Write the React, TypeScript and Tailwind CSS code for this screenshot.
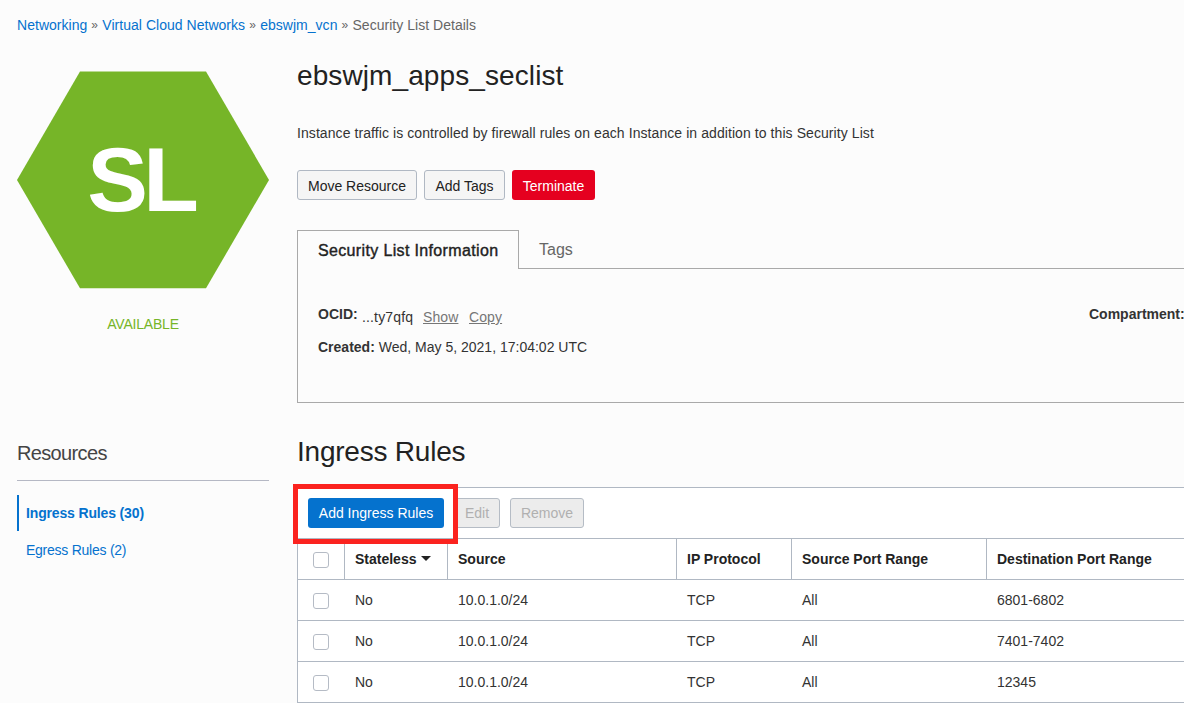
import React from 'react';

const rules = [
  { source: '10.0.1.0/24', protocol: 'TCP', sourcePorts: 'All', destPorts: '6801-6802' },
  { source: '10.0.1.0/24', protocol: 'TCP', sourcePorts: 'All', destPorts: '7401-7402' },
  { source: '10.0.1.0/24', protocol: 'TCP', sourcePorts: 'All', destPorts: '12345' },
];

function Checkbox() {
  return (
    <span
      role="checkbox"
      aria-checked="false"
      className="mt-px ml-[15px] block size-4 rounded-[3px] border border-[#b5bbc5] bg-white"
    />
  );
}

function Breadcrumb() {
  return (
    <nav className="flex h-[18px] items-center gap-1 whitespace-pre text-[14px] leading-[18px] tracking-[0.03px] text-[#666]">
      <a className="text-[#0572ce]">Networking</a>
      <span className="w-[7px] text-[12px]">»</span>
      <a className="text-[#0572ce]">Virtual Cloud Networks</a>
      <span className="w-[7px] text-[12px]">»</span>
      <a className="text-[#0572ce]">ebswjm_vcn</a>
      <span className="w-[7px] text-[12px]">»</span>
      <span>Security List Details</span>
    </nav>
  );
}

function Sidebar() {
  return (
    <aside className="w-[252px] shrink-0">
      <svg className="mt-[37px] block h-[218px] w-[252px]" viewBox="0 0 252 218">
        <polygon points="63,0.5 189,0.5 252,109 189,217.3 63,217.3 0,109" fill="#76b528" />
        <text
          x="126"
          y="140"
          textAnchor="middle"
          textLength="111.5"
          fill="#fff"
          className="font-['Liberation_Sans',sans-serif] text-[91px] font-bold"
        >
          SL
        </text>
      </svg>
      <p className="mt-[26px] text-center text-[14px] leading-[18px] tracking-[-0.2px] text-[#76b528]">AVAILABLE</p>
      <h2 className="mt-[108px] h-[40px] border-b border-[#b5b8c4] text-[20px] leading-[24px] tracking-[-0.65px] text-[#444]">
        Resources
      </h2>
      <ul className="mt-[14px] text-[14px] text-[#0572ce]">
        <li className="flex h-9 items-center border-l-2 border-[#0572ce] pl-[7px] font-bold tracking-[-0.15px]">
          Ingress Rules (30)
        </li>
        <li className="mt-px flex h-9 items-center pl-[9px] tracking-[-0.25px]">Egress Rules (2)</li>
      </ul>
    </aside>
  );
}

function InfoPanel() {
  return (
    <section className="mt-[30px]">
      <div className="flex h-[39px]">
        <div className="flex w-[222px] items-center border border-b-0 border-[#a9a9a9] pt-px pl-5 text-[16px] tracking-[0.35px] text-[#222] [-webkit-text-stroke:0.4px_#222]">
          Security List Information
        </div>
        <div className="flex flex-1 items-center border-b border-[#a9a9a9] pt-0.5 pl-5 text-[16px] text-[#666]">Tags</div>
      </div>
      <div className="flex h-[134px] border-b border-l border-[#a9a9a9] pl-5 text-[14px] leading-[18px] text-[#333]">
        <div className="w-[771px] shrink-0 pt-[36px]">
          <div className="flex h-[18px]">
            <b className="w-11">OCID:</b>
            <span className="mt-[3px] w-[61px] tracking-[0.15px]">...ty7qfq</span>
            <a className="mt-[3px] w-[46px] tracking-[0.1px] text-[#767676] underline">Show</a>
            <a className="mt-[3px] tracking-[0.1px] text-[#767676] underline">Copy</a>
          </div>
          <div className="mt-[15px] flex h-[18px] gap-1">
            <b>Created:</b>
            <span>Wed, May 5, 2021, 17:04:02 UTC</span>
          </div>
        </div>
        <b className="pt-[36px]">Compartment:</b>
      </div>
    </section>
  );
}

function RulesTable() {
  return (
    <section>
      <h2 className="mt-[32px] h-[52px] text-[28px] leading-[34px] tracking-[-0.22px] text-[#222]">Ingress Rules</h2>
      <div className="relative border-y border-l border-[#b0b8c3] bg-white">
        <div className="flex h-[50px] items-center pl-[10px] text-[14px]">
          <button className="h-[30px] w-[136px] rounded-[3px] bg-[#0572ce] text-white">Add Ingress Rules</button>
          <button className="ml-[10px] h-[30px] w-[46px] rounded-[3px] border border-[#b5bcc5] bg-[#ececec] text-[#b0b0b0]">
            Edit
          </button>
          <button className="ml-[10px] h-[30px] w-[74px] rounded-[3px] border border-[#b5bcc5] bg-[#ececec] text-[#b0b0b0]">
            Remove
          </button>
        </div>
        <div className="absolute -top-[4px] -left-[5px] h-[60px] w-[165px] border-5 border-[#fb231f]" />
      </div>
      <div className="border-l border-[#b0b8c3] bg-white text-[14px]">
        <div className="flex h-[41px] items-stretch border-b border-[#b0b8c3] font-bold text-[#222] *:flex *:items-center *:border-[#b0b8c3]">
          <div className="w-[47px] border-r"><Checkbox /></div>
          <div className="w-[103px] border-r pl-[10px]">
            Stateless
            <svg className="mb-px ml-[5px] h-[5px] w-[10px]" viewBox="0 0 10 5">
              <path d="M0 0h10L5 5z" fill="#222" />
            </svg>
          </div>
          <div className="w-[229px] border-r pl-[10px]">Source</div>
          <div className="w-[115px] border-r pl-[10px]">IP Protocol</div>
          <div className="w-[195px] border-r pl-[10px]">Source Port Range</div>
          <div className="flex-1 pl-[10px]">Destination Port Range</div>
        </div>
        {rules.map((rule) => (
          <div
            key={rule.destPorts}
            className="flex h-[41px] items-stretch border-b border-[#b0b8c3] text-[#333] *:flex *:items-center"
          >
            <div className="w-[47px]"><Checkbox /></div>
            <div className="w-[103px] pl-[10px]">No</div>
            <div className="w-[229px] pl-[10px]">{rule.source}</div>
            <div className="w-[115px] pl-[10px]">{rule.protocol}</div>
            <div className="w-[195px] pl-[10px]">{rule.sourcePorts}</div>
            <div className="flex-1 pl-[10px]">{rule.destPorts}</div>
          </div>
        ))}
      </div>
    </section>
  );
}

export default function App() {
  return (
    <div className="h-[703px] w-[1184px] overflow-hidden bg-[#fcfcfc] pt-4 pl-[17px] font-['Liberation_Sans',Arial,sans-serif]">
      <Breadcrumb />
      <div className="flex gap-7">
        <Sidebar />
        <main className="w-[887px] shrink-0 whitespace-nowrap">
          <h1 className="mt-[25px] text-[28px] leading-[34px] tracking-[0.1px] text-[#222]">ebswjm_apps_seclist</h1>
          <p className="mt-[31px] text-[14px] leading-[18px] tracking-[0.076px] text-[#333]">
            Instance traffic is controlled by firewall rules on each Instance in addition to this Security List
          </p>
          <div className="mt-[28px] flex gap-[7px] text-[14px] text-[#222] *:h-[30px] *:rounded-[3px] *:pt-0.5">
            <button className="w-[120px] border border-[#b0b8c3] bg-[#f5f5f5]">Move Resource</button>
            <button className="w-[81px] border border-[#b0b8c3] bg-[#f5f5f5]">Add Tags</button>
            <button className="w-[83px] bg-[#e5001f] text-white">Terminate</button>
          </div>
          <InfoPanel />
          <RulesTable />
        </main>
      </div>
    </div>
  );
}
